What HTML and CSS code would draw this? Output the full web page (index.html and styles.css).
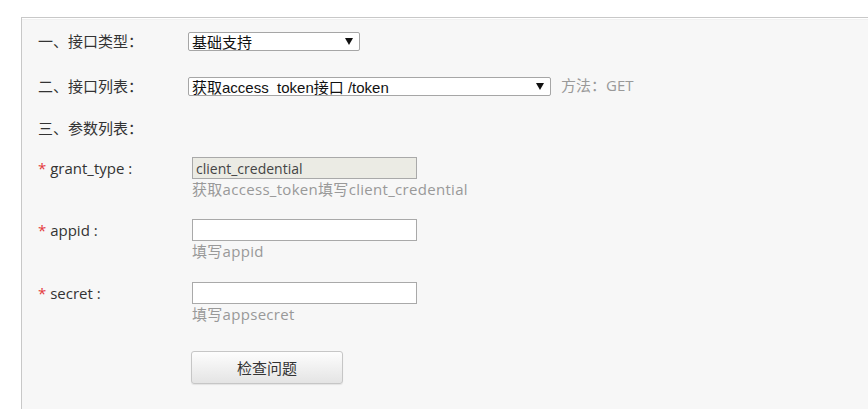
FILE: index.html
```html
<!DOCTYPE html>
<html lang="zh-CN">
<head>
<meta charset="utf-8">
<title>接口调试</title>
<link rel="stylesheet" href="styles.css">
</head>
<body>
<div class="panel">
  <form class="form">
    <div class="row row-type">
      <label class="label">一、接口类型：</label>
      <div class="field">
        <span class="select select-short"><span class="select-text">基础支持</span></span>
      </div>
    </div>
    <div class="row row-list">
      <label class="label">二、接口列表：</label>
      <div class="field field-inline">
        <span class="select select-long"><span class="select-text">获取access_token接口 /token</span></span>
        <span class="method">方法：GET</span>
      </div>
    </div>
    <div class="row row-params">
      <label class="label">三、参数列表：</label>
    </div>
    <div class="row param param-first">
      <label class="label"><span class="req">*</span> grant_type :</label>
      <div class="field">
        <input class="input input-disabled" type="text" value="client_credential" disabled>
        <div class="hint">获取access_token填写client_credential</div>
      </div>
    </div>
    <div class="row param param-mid">
      <label class="label"><span class="req">*</span> appid :</label>
      <div class="field">
        <input class="input" type="text" value="">
        <div class="hint">填写appid</div>
      </div>
    </div>
    <div class="row param param-last">
      <label class="label"><span class="req">*</span> secret :</label>
      <div class="field">
        <input class="input" type="text" value="">
        <div class="hint">填写appsecret</div>
      </div>
    </div>
    <div class="row row-btn">
      <span class="label"></span>
      <div class="field">
        <button class="btn" type="button">检查问题</button>
      </div>
    </div>
  </form>
</div>
</body>
</html>
```

FILE: styles.css
```css
html, body {
  margin: 0;
  padding: 0;
  background: #ffffff;
  overflow: hidden;
}
body {
  font-family: "Open Sans", "Noto Sans CJK SC", sans-serif;
  color: #333333;
  font-size: 15px;
}
.panel {
  margin: 17px 0 0 21px;
  height: 391px;
  background: #f7f7f7;
  border-top: 1px solid #c8c8c8;
  border-left: 1px solid #c8c8c8;
  box-shadow: inset 0 1px 0 #ffffff, inset 0 2px 0 #f0f0f0;
}
.form {
  margin: 0;
  padding: 14px 0 0 16px;
}
.row {
  display: grid;
  grid-template-columns: 150px 1fr;
  align-items: start;
}
.label {
  font-size: 15px;
  line-height: 19px;
  color: #333333;
  white-space: nowrap;
}
.row-type { margin-bottom: 26px; }
.row-list { margin-bottom: 22px; }
.row-params { margin-bottom: 19px; }
.row-params .label { line-height: 20px; }
.param .label { line-height: 22px; }
.param-first { margin-bottom: 20px; }
.param-mid { margin-bottom: 21px; }
.param-last { margin-bottom: 27px; }
.req {
  color: #e4393c;
}
.field-inline {
  display: flex;
  align-items: center;
  gap: 10px;
}
.select {
  position: relative;
  display: block;
  box-sizing: border-box;
  height: 19px;
  background: #ffffff;
  border: 1px solid #a6a6a6;
  border-radius: 2px;
  overflow: hidden;
}
.select-short { width: 172px; }
.select-long { width: 363px; }
.select-text {
  display: block;
  padding-left: 3px;
  font-family: "Liberation Sans", "Noto Sans CJK SC", sans-serif;
  font-size: 15px;
  line-height: 17px;
  padding-top: 1px;
  color: #111111;
  white-space: nowrap;
}
.select::after {
  content: "";
  position: absolute;
  right: 6px;
  top: 5px;
  width: 0;
  height: 0;
  border-left: 4px solid transparent;
  border-right: 4px solid transparent;
  border-top: 7px solid #111111;
}
.method {
  color: #999999;
  font-size: 15px;
  line-height: 19px;
  margin-top: -3px;
}
.input {
  display: block;
  box-sizing: border-box;
  width: 225px;
  height: 22px;
  margin: 0 0 0 4px;
  padding: 0 3px;
  border: 1px solid #a9a9a9;
  background: #ffffff;
  font-family: "Open Sans", "Noto Sans CJK SC", sans-serif;
  font-size: 14px;
  color: #333333;
  outline: none;
}
.input-disabled {
  background: #ebebe4;
  color: #444444;
  -webkit-text-fill-color: #444444;
  opacity: 1;
}
.hint {
  margin-left: 4px;
  font-size: 15px;
  line-height: 20px;
  color: #999999;
  letter-spacing: 0.3px;
  white-space: nowrap;
}
.btn {
  display: block;
  margin-left: 3px;
  width: 152px;
  height: 33px;
  border: 1px solid #c6c6c6;
  border-radius: 3px;
  background: linear-gradient(#fdfdfd, #e4e4e4);
  box-shadow: 0 1px 1px rgba(0, 0, 0, 0.08);
  font-family: "Open Sans", "Noto Sans CJK SC", sans-serif;
  font-size: 15px;
  color: #333333;
  padding: 0;
  cursor: pointer;
}
```
